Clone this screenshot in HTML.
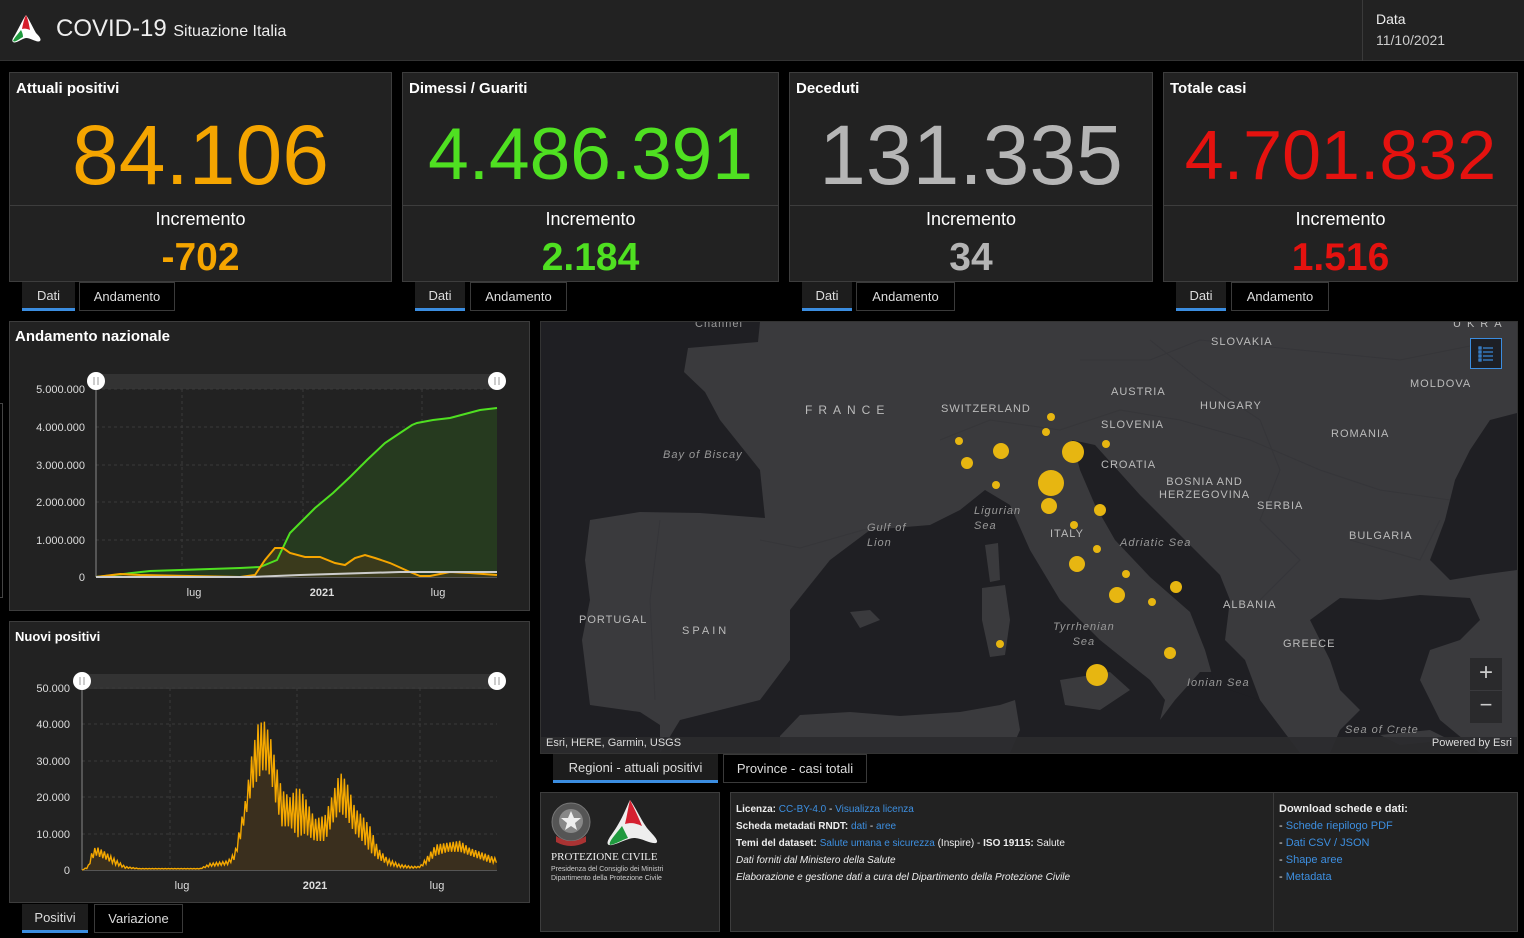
<!DOCTYPE html>
<html><head><meta charset="utf-8">
<style>
*{margin:0;padding:0;box-sizing:border-box}
body{width:1524px;height:938px;background:#000;font-family:"Liberation Sans",sans-serif;color:#fff;position:relative;overflow:hidden}
.a{position:absolute}
.card{position:absolute;top:72px;height:210px;background:#222;border:1px solid #3d3d3d}
.card .t{position:absolute;left:6px;top:7px;font-size:15px;font-weight:bold}
.card .big{position:absolute;left:0;right:0;top:82px;text-align:center;line-height:0}
.card .sep{position:absolute;left:0;right:0;top:132px;border-top:1px solid #3d3d3d}
.card .inc{position:absolute;left:0;right:0;top:136px;text-align:center;font-size:18px}
.card .iv{position:absolute;left:0;right:0;top:163px;text-align:center;font-size:39px;font-weight:bold}
.tab{position:absolute;height:29px;font-size:13px;line-height:27px;text-align:center;color:#ddd;border:1px solid #3a3a3a;background:#000}
.tab.on{background:#1d1d1d;border:none;border-bottom:3px solid #3b8de0}
.panel{position:absolute;background:#222;border:1px solid #3d3d3d}
.ml{position:absolute;font-size:11px;color:#bbb;letter-spacing:1px;white-space:nowrap}
.mi{position:absolute;font-size:11px;color:#999;font-style:italic;letter-spacing:1px;white-space:nowrap;line-height:15px}
.blue{color:#3d8fe0}
.info div{height:17px}
</style></head><body>
<div class="a" style="left:0;top:0;width:1524px;height:61px;background:#222;border-bottom:1px solid #333"></div>
<svg class="a" style="left:9px;top:13px" width="34" height="32" viewBox="0 0 34 32">
<path d="M17 2 C14 6 11 13 7 20 C5 24 2 27 4 29 C7 31 12 26 17 25 C22 25 28 30 31 28 C33 26 29 22 27 20 C23 13 20 6 17 2Z" fill="#fff"/>
<path d="M17 2 C15 6 14 11 13 16 C16 15 19 16 21 17 C20 11 19 6 17 2Z" fill="#d61d2a"/>
<path d="M12 17 C9 21 5 25 4 28 C6 30 10 26 14 24 C14 21 13 19 12 17Z" fill="#1f9a3e"/>
</svg>
<div class="a" style="left:56px;top:15px;font-size:24px;color:#eee">COVID-19 <span style="font-size:16px">Situazione Italia</span></div>
<div class="a" style="left:1362px;top:0;width:1px;height:61px;background:#3a3a3a"></div>
<div class="a" style="left:1376px;top:11px;font-size:14px;color:#eee">Data</div>
<div class="a" style="left:1376px;top:32px;font-size:14px;color:#ccc">11/10/2021</div>

<div class="card" style="left:9px;width:383px"><div class="t">Attuali positivi</div><div class="big" style="font-size:84px;color:#f5a500">84.106</div><div class="sep"></div><div class="inc">Incremento</div><div class="iv" style="color:#f5a500">-702</div></div>
<div class="card" style="left:402px;width:377px"><div class="t">Dimessi / Guariti</div><div class="big" style="font-size:73px;color:#4fe021">4.486.391</div><div class="sep"></div><div class="inc">Incremento</div><div class="iv" style="color:#4fe021">2.184</div></div>
<div class="card" style="left:789px;width:364px"><div class="t">Deceduti</div><div class="big" style="font-size:84px;color:#b5b5b5">131.335</div><div class="sep"></div><div class="inc">Incremento</div><div class="iv" style="color:#b5b5b5">34</div></div>
<div class="card" style="left:1163px;width:355px"><div class="t">Totale casi</div><div class="big" style="font-size:70px;color:#e5120f">4.701.832</div><div class="sep"></div><div class="inc">Incremento</div><div class="iv" style="color:#e5120f">1.516</div></div>

<div class="tab on" style="left:22px;top:282px;width:53px">Dati</div><div class="tab" style="left:79px;top:282px;width:96px">Andamento</div>
<div class="tab on" style="left:415px;top:282px;width:50px">Dati</div><div class="tab" style="left:470px;top:282px;width:97px">Andamento</div>
<div class="tab on" style="left:802px;top:282px;width:50px">Dati</div><div class="tab" style="left:856px;top:282px;width:99px">Andamento</div>
<div class="tab on" style="left:1176px;top:282px;width:50px">Dati</div><div class="tab" style="left:1231px;top:282px;width:98px">Andamento</div>

<div class="a" style="left:0;top:403px;width:3px;height:195px;border:1px solid #444;border-left:none"></div>

<div class="panel" style="left:9px;top:321px;width:521px;height:290px"></div>
<div class="a" style="left:15px;top:328px;font-size:15px;font-weight:bold">Andamento nazionale</div>
<svg class="a" style="left:0;top:360px" width="530" height="250" viewBox="0 360 530 250" font-family="Liberation Sans" font-size="11" fill="#ddd">
<rect x="96" y="374" width="401" height="15" fill="#333"/>
<g stroke="#3a3a3a" stroke-dasharray="3,3">
<line x1="96" y1="389" x2="497" y2="389"/><line x1="96" y1="427" x2="497" y2="427"/><line x1="96" y1="465" x2="497" y2="465"/><line x1="96" y1="502" x2="497" y2="502"/><line x1="96" y1="540" x2="497" y2="540"/>
<line x1="182" y1="389" x2="182" y2="577"/><line x1="303" y1="389" x2="303" y2="577"/><line x1="422" y1="389" x2="422" y2="577"/>
</g>
<line x1="96" y1="381" x2="96" y2="577" stroke="#888"/>
<line x1="96" y1="577" x2="497" y2="577" stroke="#888"/>
<g text-anchor="end"><text x="85" y="393">5.000.000</text><text x="85" y="431">4.000.000</text><text x="85" y="469">3.000.000</text><text x="85" y="506">2.000.000</text><text x="85" y="544">1.000.000</text><text x="85" y="581">0</text></g>
<g text-anchor="middle"><text x="194" y="596">lug</text><text x="322" y="596" font-weight="bold">2021</text><text x="438" y="596">lug</text></g>
<path d="M96 577 L150 571 L180 570 L240 568 L260 567 L277 560 L290 533 L300 523 L315 508 L333 493 L350 477 L367 460 L385 443 L400 433 L412 425 L417 423 L433 420 L450 418 L465 414 L480 410 L497 408 L497 577Z" fill="#263a1f"/>
<path d="M96 577 L120 574 L140 575 L240 577 L255 575 L265 560 L275 548 L283 548 L290 553 L305 557 L320 557 L335 563 L345 565 L355 558 L365 555 L375 558 L390 563 L410 572 L420 576 L430 576 L450 572 L470 573 L497 575 L497 577Z" fill="#3a3a1c"/>
<polyline points="96,577 150,571 180,570 240,568 260,567 277,560 290,533 300,523 315,508 333,493 350,477 367,460 385,443 400,433 412,425 417,423 433,420 450,418 465,414 480,410 497,408" fill="none" stroke="#4fe021" stroke-width="2"/>
<polyline points="96,577 120,574 140,575 240,577 255,575 265,560 275,548 283,548 290,553 305,557 320,557 335,563 345,565 355,558 365,555 375,558 390,563 410,572 420,576 430,576 450,572 470,573 497,575" fill="none" stroke="#f5a500" stroke-width="2"/>
<polyline points="96,577 250,577 300,575 400,572 497,572" fill="none" stroke="#ccc" stroke-width="2"/>
<circle cx="96" cy="381" r="9" fill="#fff"/><circle cx="497" cy="381" r="9" fill="#fff"/>
<g stroke="#999"><line x1="94" y1="377" x2="94" y2="385"/><line x1="98" y1="377" x2="98" y2="385"/><line x1="495" y1="377" x2="495" y2="385"/><line x1="499" y1="377" x2="499" y2="385"/></g>
</svg>

<div class="panel" style="left:9px;top:621px;width:521px;height:282px"></div>
<div class="a" style="left:15px;top:629px;font-size:13px;font-weight:bold">Nuovi positivi</div>
<svg class="a" style="left:0;top:660px" width="530" height="243" viewBox="0 660 530 243" font-family="Liberation Sans" font-size="11" fill="#ddd">
<rect x="82" y="674" width="415" height="15" fill="#333"/>
<g stroke="#3a3a3a" stroke-dasharray="3,3">
<line x1="82" y1="688" x2="497" y2="688"/><line x1="82" y1="724" x2="497" y2="724"/><line x1="82" y1="761" x2="497" y2="761"/><line x1="82" y1="797" x2="497" y2="797"/><line x1="82" y1="834" x2="497" y2="834"/>
<line x1="170" y1="688" x2="170" y2="870"/><line x1="297" y1="688" x2="297" y2="870"/><line x1="420" y1="688" x2="420" y2="870"/>
</g>
<line x1="82" y1="681" x2="82" y2="870" stroke="#888"/>
<line x1="82" y1="870" x2="497" y2="870" stroke="#888"/>
<g text-anchor="end"><text x="70" y="692">50.000</text><text x="70" y="728">40.000</text><text x="70" y="765">30.000</text><text x="70" y="801">20.000</text><text x="70" y="838">10.000</text><text x="70" y="874">0</text></g>
<g text-anchor="middle"><text x="182" y="889">lug</text><text x="315" y="889" font-weight="bold">2021</text><text x="437" y="889">lug</text></g>
<path id="fa" d="" fill="#3a2f1e"/>
<path id="ln" d="" fill="none" stroke="#f5a800" stroke-width="1.4"/>
<circle cx="82" cy="681" r="9" fill="#fff"/><circle cx="497" cy="681" r="9" fill="#fff"/>
<g stroke="#999"><line x1="80" y1="677" x2="80" y2="685"/><line x1="84" y1="677" x2="84" y2="685"/><line x1="495" y1="677" x2="495" y2="685"/><line x1="499" y1="677" x2="499" y2="685"/></g>
</svg>
<script>
(function(){var k=[[82,0,0],[88,0.5,1],[92,3,5],[96,4,6.5],[105,3,5],[115,1.5,3],[125,0.5,1],[140,0.3,0.4],[200,0.3,0.4],[210,1,1.8],[228,1.5,2.5],[235,3,5],[240,8,12],[246,15,20],[252,22,32],[258,25,40],[264,28,41],[270,26,37],[276,18,29],[282,12,22],[290,12,20],[298,9,23],[305,10,20],[315,8,14],[325,8,15],[333,13,21],[340,16,27],[347,14,24],[355,10,17],[362,8,15],[370,5,12],[378,3,6],[388,1.5,3],[400,0.7,1.5],[412,0.5,1],[420,0.7,1],[428,2,4],[436,4,7],[448,5,7.5],[460,5,8],[470,4,6],[480,3,5],[490,2,4],[497,2,3]];
function env(x,i){for(var j=0;j<k.length-1;j++){if(x>=k[j][0]&&x<=k[j+1][0]){var t=(x-k[j][0])/(k[j+1][0]-k[j][0]);return k[j][i]+t*(k[j+1][i]-k[j][i]);}}return 0;}
var p=[],n=0;for(var x=82;x<=497;x+=1.6){var v=(n%2?env(x,1):env(x,2));n++;p.push(x.toFixed(1)+' '+(870-v*3.64).toFixed(1));}
var d='M'+p.join(' L');document.getElementById('ln').setAttribute('d',d);document.getElementById('fa').setAttribute('d',d+' L497 870 L82 870Z');})();
</script>

<div class="tab on" style="left:22px;top:904px;width:66px">Positivi</div><div class="tab" style="left:94px;top:904px;width:89px">Variazione</div>

<div class="a" style="left:540px;top:321px;width:978px;height:433px;border:1px solid #333;background:#3a3a3d;overflow:hidden">
<svg width="976" height="431" viewBox="541 322 976 431" style="display:block">
<rect x="541" y="322" width="976" height="431" fill="#3a3a3d"/>
<g fill="#1f1f23">
<path d="M541 322 L760 322 L758 342 L688 348 L684 372 L705 392 L720 420 L760 470 L765 518 L700 513 L640 512 L590 520 L585 560 L590 600 L582 640 L590 705 L640 712 L660 725 L660 753 L541 753Z"/>
<path d="M660 753 L680 720 L760 700 L790 660 L790 610 L830 560 L870 530 L930 525 L960 510 L985 490 L1010 505 L1030 550 L1060 600 L1100 640 L1150 680 L1165 700 L1160 720 L1175 700 L1200 672 L1215 672 L1240 670 L1260 700 L1300 753Z"/>
<path d="M1072 440 L1095 445 L1140 495 L1190 545 L1220 575 L1230 600 L1225 640 L1245 660 L1260 700 L1215 685 L1205 650 L1190 612 L1150 577 L1115 540 L1095 505 L1080 470Z"/>
<path d="M1310 620 L1340 598 L1380 600 L1420 595 L1470 598 L1480 620 L1460 640 L1430 650 L1420 680 L1440 720 L1480 753 L1330 753 L1340 730 L1360 710 L1340 690 L1330 660Z"/>
<path d="M1517 413 L1490 420 L1470 450 L1455 480 L1445 520 L1430 560 L1450 580 L1480 575 L1517 570Z"/>
</g>
<g fill="#3a3a3d">
<path d="M780 736 L800 715 L850 712 L900 716 L960 712 L1000 705 L1015 700 L1020 730 L1010 753 L780 753Z"/>
<path d="M1060 680 L1110 672 L1130 690 L1100 710 L1065 705Z"/>
<path d="M985 545 L998 543 L1000 580 L990 582Z"/>
<path d="M982 588 L1005 585 L1010 620 L1005 655 L990 657 L982 620Z"/>
<path d="M850 612 L870 610 L880 620 L860 628Z"/>
<path d="M1380 735 L1430 730 L1450 740 L1400 745Z"/>
</g>
<g fill="none" stroke="#333337" stroke-width="1" opacity="0.6">
<path d="M660 520 L650 600 L655 700"/><path d="M760 540 L800 548 L870 528"/><path d="M940 440 L990 420 L1060 430 L1120 410 L1180 420 L1250 440 L1320 470 L1380 490 L1450 500"/><path d="M1150 340 L1200 380 L1260 420 L1280 470 L1260 520 L1300 560 L1260 600"/><path d="M1080 360 L1150 360 L1200 340 L1300 350 L1400 360 L1500 340"/><path d="M1350 540 L1420 560 L1440 520"/>
</g>
<g fill="#e7b611">
<circle cx="959" cy="441" r="4"/><circle cx="967" cy="463" r="6"/><circle cx="1001" cy="451" r="8"/><circle cx="1051" cy="417" r="4"/><circle cx="1046" cy="432" r="4"/><circle cx="1073" cy="452" r="11"/><circle cx="1106" cy="444" r="4"/><circle cx="1051" cy="483" r="13"/><circle cx="1049" cy="506" r="8"/><circle cx="996" cy="485" r="4"/><circle cx="1100" cy="510" r="6"/><circle cx="1074" cy="525" r="4"/><circle cx="1097" cy="549" r="4"/><circle cx="1077" cy="564" r="8"/><circle cx="1126" cy="574" r="4"/><circle cx="1117" cy="595" r="8"/><circle cx="1152" cy="602" r="4"/><circle cx="1176" cy="587" r="6"/><circle cx="1000" cy="644" r="4"/><circle cx="1170" cy="653" r="6"/><circle cx="1097" cy="675" r="11"/>
</g>
<rect x="541" y="737" width="976" height="16" fill="#2b2b2d" opacity="0.9"/>
</svg>
<div class="ml" style="left:264px;top:81px;font-size:12px;letter-spacing:6px">FRANCE</div>
<div class="ml" style="left:400px;top:81px">SWITZERLAND</div>
<div class="ml" style="left:670px;top:14px">SLOVAKIA</div>
<div class="ml" style="left:570px;top:64px">AUSTRIA</div>
<div class="ml" style="left:659px;top:78px">HUNGARY</div>
<div class="ml" style="left:560px;top:97px">SLOVENIA</div>
<div class="ml" style="left:869px;top:56px">MOLDOVA</div>
<div class="ml" style="left:790px;top:106px">ROMANIA</div>
<div class="ml" style="left:560px;top:137px">CROATIA</div>
<div class="ml" style="left:618px;top:154px;text-align:center;line-height:13px">BOSNIA AND<br>HERZEGOVINA</div>
<div class="ml" style="left:716px;top:178px">SERBIA</div>
<div class="ml" style="left:808px;top:208px">BULGARIA</div>
<div class="ml" style="left:509px;top:206px">ITALY</div>
<div class="ml" style="left:682px;top:277px">ALBANIA</div>
<div class="ml" style="left:742px;top:316px">GREECE</div>
<div class="ml" style="left:38px;top:292px">PORTUGAL</div>
<div class="ml" style="left:141px;top:303px;letter-spacing:3px">SPAIN</div>
<div class="ml" style="left:912px;top:-4px;letter-spacing:6px">UKRA</div>
<div class="mi" style="left:122px;top:126px">Bay of Biscay</div>
<div class="mi" style="left:326px;top:199px">Gulf of<br>Lion</div>
<div class="mi" style="left:433px;top:182px">Ligurian<br>Sea</div>
<div class="mi" style="left:579px;top:214px">Adriatic Sea</div>
<div class="mi" style="left:512px;top:298px;text-align:center">Tyrrhenian<br>Sea</div>
<div class="mi" style="left:646px;top:354px">Ionian Sea</div>
<div class="mi" style="left:804px;top:401px">Sea of Crete</div>
<div class="ml" style="left:154px;top:-4px;color:#999">Channel</div>
<div class="a" style="left:5px;top:415px;font-size:11px;color:#ddd">Esri, HERE, Garmin, USGS</div>
<div class="a" style="right:5px;top:415px;font-size:11px;color:#ddd">Powered by Esri</div>
<div class="a" style="left:929px;top:16px;width:32px;height:31px;border:1px solid #3b8de0;background:#1d1f25">
<svg width="30" height="29" viewBox="0 0 30 29"><g stroke="#3b8de0" stroke-width="1.2"><rect x="8" y="8" width="2" height="2" fill="none"/><rect x="8" y="12" width="2" height="2" fill="none"/><rect x="8" y="16" width="2" height="2" fill="none"/><rect x="8" y="20" width="2" height="2" fill="none"/><line x1="12" y1="9" x2="22" y2="9"/><line x1="12" y1="13" x2="22" y2="13"/><line x1="12" y1="17" x2="22" y2="17"/><line x1="12" y1="21" x2="22" y2="21"/></g></svg></div>
<div class="a" style="left:929px;top:336px;width:32px;height:32px;background:#2a2a2c;color:#ccc;font-size:24px;text-align:center;line-height:30px">+</div>
<div class="a" style="left:929px;top:369px;width:32px;height:32px;background:#2a2a2c;color:#ccc;font-size:22px;text-align:center;line-height:28px">−</div>
</div>
<div class="tab on" style="left:553px;top:754px;width:165px">Regioni - attuali positivi</div>
<div class="tab" style="left:723px;top:754px;width:144px">Province - casi totali</div>

<div class="panel" style="left:540px;top:792px;width:180px;height:140px"></div>
<svg class="a" style="left:548px;top:798px" width="115" height="52" viewBox="0 0 115 52">
<circle cx="23" cy="24" r="19" fill="#555" stroke="#777"/><circle cx="23" cy="23" r="12" fill="#888"/>
<path d="M23 13 L26 20 L33 20 L27 25 L29 32 L23 28 L17 32 L19 25 L13 20 L20 20Z" fill="#eee"/>
<path d="M8 38 Q23 48 38 38 L38 44 Q23 52 8 44Z" fill="#a33"/>
<path d="M82 2 C78 10 74 22 64 36 C58 44 58 48 64 47 C72 45 80 40 86 40 C94 40 102 46 108 45 C112 43 104 36 99 30 C92 20 88 10 82 2Z" fill="#eee"/>
<path d="M82 2 C80 10 79 18 77 26 C84 24 90 26 94 28 C90 18 86 10 82 2Z" fill="#d52030"/>
<path d="M74 28 C68 36 60 44 62 47 C68 46 74 42 80 40 C78 36 76 32 74 28Z" fill="#1f9a3e"/>
</svg>
<div class="a" style="left:551px;top:851px;font-family:'Liberation Serif',serif;font-size:11px;color:#eee">PROTEZIONE CIVILE</div>
<div class="a" style="left:551px;top:865px;font-size:7px;color:#ccc;line-height:9px">Presidenza del Consiglio dei Ministri<br>Dipartimento della Protezione Civile</div>

<div class="panel" style="left:730px;top:792px;width:788px;height:140px"></div>
<div class="a" style="left:1273px;top:793px;width:1px;height:138px;background:#3a3a3a"></div>
<div class="a info" style="left:736px;top:802px;font-size:10px;color:#eee;line-height:15px">
<div><b>Licenza:</b> <span class="blue">CC-BY-4.0</span> - <span class="blue">Visualizza licenza</span></div>
<div><b>Scheda metadati RNDT:</b> <span class="blue">dati</span> - <span class="blue">aree</span></div>
<div><b>Temi del dataset:</b> <span class="blue">Salute umana e sicurezza</span> (Inspire) - <b>ISO 19115:</b> Salute</div>
<div><i>Dati forniti dal Ministero della Salute</i></div>
<div><i>Elaborazione e gestione dati a cura del Dipartimento della Protezione Civile</i></div>
</div>
<div class="a info" style="left:1279px;top:802px;font-size:11px;color:#eee;line-height:15px">
<div><b>Download schede e dati:</b></div>
<div>- <span class="blue">Schede riepilogo PDF</span></div>
<div>- <span class="blue">Dati CSV / JSON</span></div>
<div>- <span class="blue">Shape aree</span></div>
<div>- <span class="blue">Metadata</span></div>
</div>
</body></html>
